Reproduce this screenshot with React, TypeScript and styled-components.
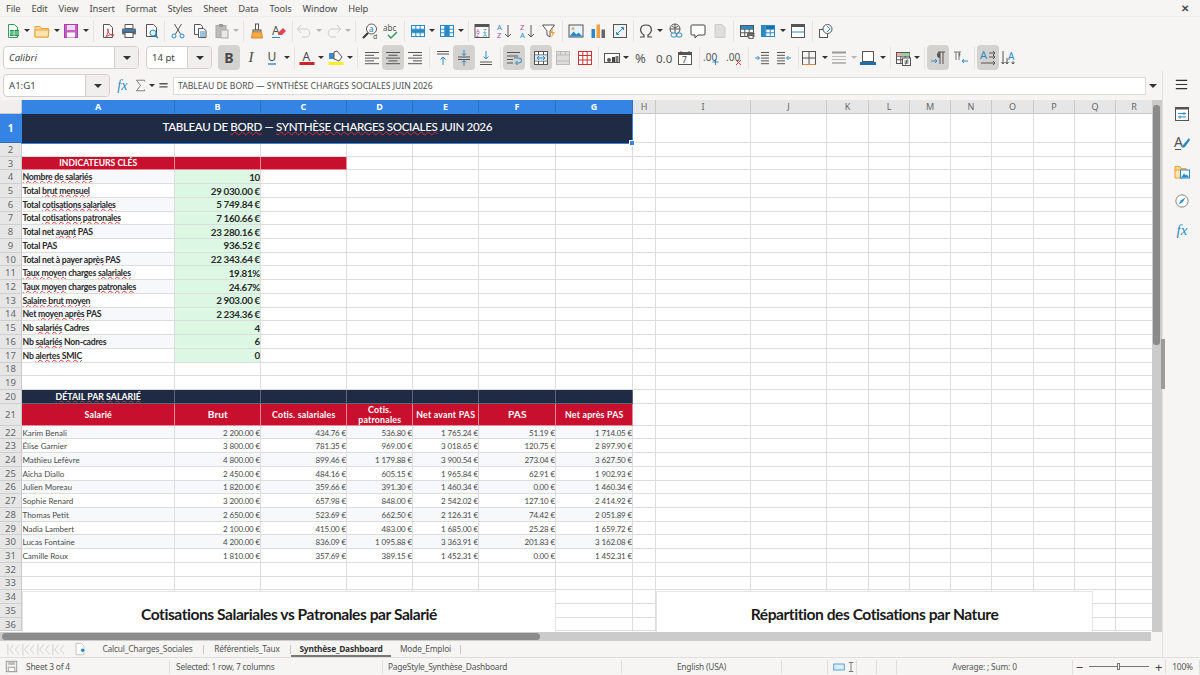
import React from "react";
import styled, { createGlobalStyle } from "styled-components";

const UI_FONT = '"Noto Sans", "Open Sans", sans-serif';
const CELL_FONT = 'Lato, "Noto Sans", sans-serif';
const BLUE = "#2a8ac8";
const NAVY = "#1f2a44";
const RED = "#c8102e";
const GRID = "#dddddd";

const GlobalStyle = createGlobalStyle`
  html, body { margin: 0; padding: 0; height: 100%; background: #f6f5f4; overflow: hidden; }
  #root { width: 1200px; height: 675px; }
`;

const Page = styled.div`
  width: 1200px;
  height: 675px;
  display: flex;
  flex-direction: column;
  font-family: ${UI_FONT};
  color: #3d3d3d;
  background: #f6f5f4;
  overflow: hidden;
`;

/* ---------- menu ---------- */

const MenuBar = styled.div`
  height: 17px;
  box-sizing: border-box;
  display: flex;
  align-items: center;
  padding: 0 6px;
  gap: 11px;
  font-size: 9.4px;
  letter-spacing: -0.15px;
  flex: none;
  color: #4a4a4a;
  border-bottom: 1px solid #efeeec;
`;

const CloseMark = styled.span`
  margin-left: auto;
  margin-right: 5px;
  font-size: 10px;
  font-weight: 700;
`;

/* ---------- toolbars ---------- */

const ToolRow = styled.div<{ $h: number }>`
  height: ${(p) => p.$h}px;
  display: flex;
  align-items: center;
  flex: none;
`;

const Slot = styled.div<{ $w: number }>`
  width: ${(p) => p.$w}px;
  height: 100%;
  flex: none;
  display: flex;
  align-items: center;
  justify-content: center;
`;

const ToolButton = styled.div<{ $active?: boolean; $dim?: boolean }>`
  width: 22px;
  height: 25px;
  flex: none;
  display: flex;
  align-items: center;
  justify-content: center;
  border-radius: 4px;
  background: ${(p) => (p.$active ? "#d4d2cf" : "transparent")};
  opacity: ${(p) => (p.$dim ? 0.45 : 1)};
`;

const Caret = styled.span<{ $dim?: boolean }>`
  width: 0;
  height: 0;
  border-left: 3px solid transparent;
  border-right: 3px solid transparent;
  border-top: 3px solid ${(p) => (p.$dim ? "#b5b5b5" : "#333")};
`;

const SepLine = styled.span`
  width: 1px;
  height: 22px;
  background: #e6e4e1;
`;

const GlyphB = styled.span`
  font: 700 14px ${UI_FONT};
  color: #4a4a4a;
`;

const GlyphI = styled.span`
  font: italic 400 15px "Liberation Serif", serif;
  color: #4a4a4a;
`;

const GlyphU = styled.span`
  font: 400 12px ${UI_FONT};
  color: #4a4a4a;
  border-bottom: 2px solid #6fa8d6;
  line-height: 13px;
`;

const Combo = styled.div<{ $w: number; $left: number }>`
  width: ${(p) => p.$w}px;
  height: 23px;
  margin-left: ${(p) => p.$left}px;
  flex: none;
  display: flex;
  border: 1px solid #d3d0cc;
  border-radius: 4px;
  background: #fff;
  overflow: hidden;
  box-sizing: border-box;
`;

const ComboText = styled.div<{ $italic?: boolean }>`
  flex: 1;
  display: flex;
  align-items: center;
  padding-left: 5px;
  font-size: 9.6px;
  font-style: ${(p) => (p.$italic ? "italic" : "normal")};
  color: #444;
`;

const ComboArrow = styled.div<{ $w: number }>`
  width: ${(p) => p.$w}px;
  flex: none;
  display: flex;
  align-items: center;
  justify-content: center;
  background: #f1efed;
  border-left: 1px solid #d3d0cc;
`;

const BigCaret = styled(Caret)`
  border-left-width: 4px;
  border-right-width: 4px;
  border-top-width: 4px;
`;

/* ---------- body ---------- */

const Body = styled.div`
  flex: 1;
  min-height: 0;
  display: flex;
`;

const MainColumn = styled.div`
  width: 1162px;
  flex: none;
  display: flex;
  flex-direction: column;
`;

const FormulaBar = styled.div`
  height: 29px;
  flex: none;
  display: flex;
  align-items: center;
  padding-left: 3px;
`;

const FormulaIcons = styled.div`
  width: 63px;
  flex: none;
  display: flex;
  align-items: center;
  height: 100%;
`;

const FormulaInput = styled.div`
  width: 973px;
  height: 18px;
  flex: none;
  box-sizing: border-box;
  background: #fff;
  border: 1px solid #dddbd8;
  display: flex;
  align-items: center;
  padding-left: 4px;
  font-size: 8.6px;
  color: #4d4d4d;
  white-space: nowrap;
`;

const SheetRow = styled.div`
  height: 532px;
  flex: none;
  display: flex;
  position: relative;
`;

const SheetViewport = styled.div`
  width: 1152px;
  flex: none;
  height: 100%;
  overflow: hidden;
  position: relative;
  background: #fff;
`;

const SheetGrid = styled.div`
  display: grid;
  grid-template-columns: 22px 153px 86px 86px 66px 66px 77px 77px 23px 95px 76px 42px 41px 41px 41px 42px 41px 41px 37px;
  grid-template-rows: 14px 29px repeat(19, 13.72px) 22px repeat(15, 13.72px);
  font-family: ${CELL_FONT};
`;

const ColHead = styled.div<{ $on?: boolean }>`
  box-sizing: border-box;
  display: flex;
  align-items: center;
  justify-content: center;
  font: ${(p) => (p.$on ? 700 : 400)} 9px ${UI_FONT};
  color: ${(p) => (p.$on ? "#fff" : "#666")};
  background: ${(p) => (p.$on ? "#3584e4" : "#e6e6e6")};
  border-right: 1px solid ${(p) => (p.$on ? "#2a6fc2" : "#c9c9c9")};
  border-bottom: 1px solid ${(p) => (p.$on ? "#9fc4f0" : "#c9c9c9")};
`;

const RowHead = styled(ColHead)`
  font-size: ${(p) => (p.$on ? 10 : 9.5)}px;
  border-right: 1px solid #c9c9c9;
  border-bottom: 1px solid ${(p) => (p.$on ? "#2a6fc2" : "#cfcfcf")};
`;

const Corner = styled.div`
  background: #f0efed;
  border-right: 1px solid #c9c9c9;
  border-bottom: 1px solid #c9c9c9;
`;

const Cell = styled.div<{
  $bg?: string;
  $span?: number;
  $align?: string;
  $color?: string;
  $size?: number;
  $weight?: number;
  $line?: string;
  $spacing?: number;
  $drop?: number;
  $lift?: number;
}>`
  box-sizing: border-box;
  min-width: 0;
  grid-column: span ${(p) => p.$span ?? 1};
  display: flex;
  align-items: center;
  justify-content: ${(p) => p.$align ?? "flex-start"};
  white-space: nowrap;
  overflow: hidden;
  padding: ${(p) => p.$drop ?? 0}px 0 ${(p) => p.$lift ?? 0}px 0.5px;
  background: ${(p) => p.$bg ?? "#fff"};
  color: ${(p) => p.$color ?? "#222"};
  font-size: ${(p) => p.$size ?? 9}px;
  font-weight: ${(p) => p.$weight ?? 400};
  letter-spacing: ${(p) => p.$spacing ?? 0}px;
  border-right: 1px solid ${(p) => p.$line ?? GRID};
  border-bottom: 1px solid ${(p) => p.$line ?? GRID};
`;

const WrapHead = styled.span`
  white-space: normal;
  text-align: center;
  line-height: 10px;
  width: 52px;
`;

const Squiggle = styled.span`
  text-decoration: underline wavy #d9303c 1px;
  text-underline-offset: 0;
`;

const Selection = styled.div`
  position: absolute;
  left: 21px;
  top: 13px;
  width: 610px;
  height: 29px;
  border: 1px solid #3584e4;
  pointer-events: none;
`;

const FillHandle = styled.div`
  position: absolute;
  right: -3px;
  bottom: -3px;
  width: 4px;
  height: 4px;
  background: #3584e4;
  border: 1px solid #fff;
`;

const ChartFrame = styled.div<{ $left: number; $width: number }>`
  position: absolute;
  left: ${(p) => p.$left}px;
  top: 491px;
  width: ${(p) => p.$width}px;
  height: 60px;
  box-sizing: border-box;
  background: #fff;
  border: 1px solid #e4e4e4;
  display: flex;
  justify-content: center;
  padding-top: 12.5px;
  font: 700 15.6px ${CELL_FONT};
  letter-spacing: -0.46px;
  color: #1a1a1a;
`;

const VScroll = styled.div`
  width: 10px;
  flex: none;
  background: #cbcbcb;
  padding: 5px 2px 0 1px;
  box-sizing: border-box;
`;

const VThumb = styled.div`
  height: 240px;
  border-radius: 3px;
  background: #8b8b8b;
`;

const SplitHandle = styled.div`
  position: absolute;
  left: 1161px;
  top: 239px;
  width: 4px;
  height: 50px;
  background: #9b9b9b;
`;

const HScroll = styled.div`
  height: 9px;
  width: 1151px;
  flex: none;
  background: #cbcbcb;
  padding: 1px 0 1px 2px;
  box-sizing: border-box;
`;

const HThumb = styled.div`
  width: 538px;
  height: 100%;
  border-radius: 4px;
  background: #8b8b8b;
`;

const TabStrip = styled.div`
  height: 16px;
  flex: none;
  display: flex;
  align-items: center;
  font-size: 8.4px;
  letter-spacing: -0.2px;
  color: #555;
`;

const TabNav = styled.div`
  width: 61px;
  margin-left: 6px;
  flex: none;
  display: flex;
  align-items: center;
  opacity: 0.4;
`;

const NewSheet = styled.div`
  width: 25px;
  flex: none;
  display: flex;
  justify-content: center;
`;

const Tab = styled.div<{ $active?: boolean; $w: number }>`
  width: ${(p) => p.$w}px;
  height: 16px;
  flex: none;
  box-sizing: border-box;
  display: flex;
  align-items: center;
  justify-content: center;
  font-weight: ${(p) => (p.$active ? 700 : 400)};
  color: ${(p) => (p.$active ? "#333" : "#555")};
  border-bottom: 2px solid ${(p) => (p.$active ? "#777" : "transparent")};
`;

const TabSep = styled.span`
  width: 1px;
  height: 9px;
  flex: none;
  background: #c9c7c4;
`;

const SideBar = styled.div`
  width: 38px;
  flex: none;
  display: flex;
  flex-direction: column;
  align-items: center;
  gap: 5px;
  padding-top: 1px;
  border-left: 1px solid #e2e0dd;
  box-sizing: border-box;
`;

const SideIcon = styled.div<{ $gap?: number }>`
  width: 24px;
  height: 24px;
  display: flex;
  align-items: center;
  justify-content: center;
  margin-bottom: ${(p) => p.$gap ?? 0}px;
`;

const StatusBar = styled.div`
  height: 18px;
  flex: none;
  display: flex;
  align-items: center;
  border-top: 1px solid #e0dedb;
  font-size: 8.4px;
  letter-spacing: -0.2px;
  color: #555;
  box-sizing: border-box;
`;

const StatusCell = styled.div<{ $w: number; $center?: boolean; $pad?: number; $gap?: number }>`
  width: ${(p) => p.$w}px;
  height: 14px;
  flex: none;
  box-sizing: border-box;
  display: flex;
  align-items: center;
  gap: ${(p) => p.$gap ?? 8}px;
  padding-left: ${(p) => p.$pad ?? 0}px;
  justify-content: ${(p) => (p.$center ? "center" : "flex-start")};
  border-right: 1px solid #e0dedb;
  white-space: nowrap;
`;

const ZoomTrack = styled.div`
  width: 60px;
  height: 1px;
  background: #777;
  position: relative;
`;

const ZoomKnob = styled.div`
  position: absolute;
  left: 28px;
  top: -3px;
  width: 3px;
  height: 7px;
  border: 1px solid #777;
  background: #f6f5f4;
  box-sizing: border-box;
`;

const ZoomSign = styled.span`
  font-size: 13px;
  line-height: 12px;
  color: #444;
`;

const IconSvg = styled.svg`
  overflow: visible;
  flex: none;
`;

/* ---------- icons ---------- */

const Svg: React.FC<{ size?: number; children: React.ReactNode }> = ({ size = 16, children }) => (
  <IconSvg width={size} height={size} viewBox="0 0 16 16" fill="none">
    {children}
  </IconSvg>
);

const L = ({ d, c = "#555", w = 1 }: { d: string; c?: string; w?: number }) => (
  <path d={d} stroke={c} strokeWidth={w} fill="none" />
);

const Letter = ({ x, y, t, c = "#555", s = 9, it }: { x: number; y: number; t: string; c?: string; s?: number; it?: boolean }) => (
  <text x={x} y={y} fill={c} fontSize={s} fontFamily={it ? "Liberation Serif" : "Noto Sans"} fontStyle={it ? "italic" : "normal"}>
    {t}
  </text>
);

const Table = ({ c = "#555" }: { c?: string }) => (
  <g>
    <rect x="1.5" y="2.5" width="13" height="11" fill="#fff" stroke={c} />
    <L d="M1.5 6.2h13M1.5 9.8h13M5.8 2.5v11M10.2 2.5v11" c={c} />
  </g>
);

const aligned = (lines: [number, number][]) => lines.map(([x, w], i) => <L key={i} d={`M${x} ${2.5 + i * 2.8}h${w}`} />);

const ICONS: Record<string, React.ReactNode> = {
  newDoc: <><path d="M3.5 1.5h6l3 3v10h-9z" fill="#fff" stroke="#2f9e57" /><rect x="5" y="7" width="9" height="6" fill="#1f8f4b" /><L d="M5 9h9M5 11h9M9 7v6" c="#bfe5cc" /></>,
  open: <><path d="M1 3.5h5l1.5 2h7v8.5H1z" fill="#fcd690" stroke="#e6a23c" /><path d="M1 7h14l-1 7H1z" fill="#fde3ae" stroke="#e6a23c" /></>,
  save: <><rect x="1.5" y="1.5" width="13" height="13" fill="#c561c7" stroke="#a83ea9" /><rect x="4" y="2" width="8" height="5" fill="#f4dbf5" /><rect x="4" y="9.5" width="8" height="5" fill="#fff" /></>,
  pdf: <><path d="M3.5 1.5h6l3 3v10h-9z" fill="#fff" stroke="#555" /><L d="M6 14c2-4 3-7 2-8s-1 3 3 6c1 1 3 1 3 0s-4-1-8 2" c="#d9434e" /></>,
  print: <><path d="M4 1.5h8v4H4z" fill="#fff" stroke="#555" /><rect x="1" y="5.5" width="14" height="6" rx="1" fill="#5b6c7a" /><rect x="4" y="9.5" width="8" height="5" fill="#fff" stroke="#555" /><L d="M2 7.5h12" c="#2a8ac8" /></>,
  preview: <><path d="M2.5 1.5h7l3 3v9h-10z" fill="#fff" stroke="#555" /><circle cx="9" cy="10" r="3" fill="#e5f2fb" stroke={BLUE} /><L d="M11 12l3 3" c={BLUE} w={1.5} /></>,
  cut: <><L d="M4.5 1l6 10M11.5 1l-6 10" c="#555" /><circle cx="4" cy="13" r="2" stroke={BLUE} /><circle cx="12" cy="13" r="2" stroke={BLUE} /></>,
  copy: <><path d="M2.5 1.5h6l2 2v8h-8z" fill="#fff" stroke="#555" /><path d="M6.5 5.5h5l2.5 2v7h-7.500z" fill="#fff" stroke="#555" /><L d="M8 9h5M8 11h5M8 13h5" c={BLUE} /></>,
  paste: <><rect x="2" y="2.5" width="10" height="12" fill="#bbb" stroke="#aaa" /><rect x="5" y="1" width="4" height="3" fill="#999" /><rect x="7" y="7" width="7" height="8" fill="#e8e8e8" stroke="#aaa" /></>,
  clone: <><rect x="6.500" y="1" width="3" height="6" fill="#fff" stroke="#555" /><rect x="4" y="7" width="8" height="2" fill="#ddd" stroke="#555" /><path d="M3.5 9h9l1 6H2.500z" fill="#f5a94a" stroke="#d98a2b" /></>,
  clear: <><Letter x={1} y={12} t="A" s={12} /><L d="M1 14.500h8" c={BLUE} /><path d="M8 9l4-4 3 3-4 4H8z" fill="#e2434f" /></>,
  undo: <><L d="M2 6h8c5 0 5 8 0 8H6" c="#999" /><L d="M5 2L1.500 6l3.500 4" c="#999" /></>,
  redo: <><L d="M14 6H6c-5 0-5 8 0 8h4" c="#999" /><L d="M11 2l3.500 4-3.500 4" c="#999" /></>,
  find: <><circle cx="9.500" cy="6" r="5" fill="#fff" stroke="#555" /><Letter x={7} y={8.500} t="a" s={8} c="#2a6fa8" /><L d="M6 10l-5 5" c="#333" w={2} /><Letter x={11} y={15.500} t="d" s={7} /></>,
  spell: <><Letter x={0} y={7.500} t="abc" s={8} /><L d="M5 12l3 3 6-6" c="#2f9e57" w={1.500} /></>,
  rows: <><Table c={BLUE} /><rect x="2" y="6.500" width="12" height="3" fill={BLUE} /></>,
  cols: <><Table c={BLUE} /><rect x="6" y="3" width="4" height="10" fill={BLUE} /></>,
  sort: <><rect x="1" y="1.500" width="14" height="13" fill="#fff" stroke="#555" /><rect x="1" y="1.500" width="14" height="2.500" fill="#555" /><Letter x={2} y={9.500} t="A" s={6} c="#b34bb5" /><Letter x={2} y={14.300} t="Z" s={6} c="#b34bb5" /><Letter x={9} y={9.500} t="Z" s={6} c={BLUE} /><Letter x={9} y={14.300} t="A" s={6} c={BLUE} /></>,
  asc: <><Letter x={0} y={7} t="A" s={7.500} c={BLUE} /><Letter x={0} y={15} t="Z" s={7.500} c="#b34bb5" /><L d="M11 2v12M8 11l3 3 3-3" /></>,
  desc: <><Letter x={0} y={7} t="Z" s={7.500} c="#b34bb5" /><Letter x={0} y={15} t="A" s={7.500} c={BLUE} /><L d="M11 2v12M8 11l3 3 3-3" /></>,
  filter: <><path d="M1.500 2h12l-4.500 6v6l-3-2V8z" fill="#fff" stroke="#555" /><path d="M12 5l-3 5h2.500l-1.500 5 4-6h-2.500z" fill="#f0a030" /></>,
  image: <><rect x="1" y="2" width="14" height="12" fill="#eaf4fb" stroke="#555" /><circle cx="5" cy="5.500" r="1.500" fill="#f2b04a" /><path d="M1.500 13.500l4-5 3 3 2-2 4 4z" fill={BLUE} /></>,
  chart: <><rect x="1.500" y="6" width="3.500" height="9" fill={BLUE} /><rect x="6.500" y="1.500" width="3.500" height="13.500" fill="#f0a040" /><rect x="11.500" y="6.500" width="3.500" height="8.500" fill="#666" /></>,
  pivot: <><rect x="1.500" y="1.500" width="13" height="13" fill="#f1f1f1" stroke="#555" /><L d="M5 11l6-6M9 4.500h2.500V7M4.500 9v2.500H7" c={BLUE} /></>,
  omega: <L d="M2 14h4v-2C1 9 1.500 2 8 2s7 7 2 10v2h4" c="#444" w={1.200} />,
  link: <><circle cx="7" cy="6" r="5" stroke="#555" /><L d="M2 6h10M7 1v10M4 3c2 2 4 2 6 0" /><rect x="3" y="10" width="6" height="4" rx="2" fill="#fff" stroke={BLUE} /><rect x="8" y="10" width="6" height="4" rx="2" stroke={BLUE} /></>,
  comment: <path d="M2 2h12a1 1 0 0 1 1 1v8a1 1 0 0 1-1 1H8l-3 3v-3H2a1 1 0 0 1-1-1V3a1 1 0 0 1 1-1z" fill="#fff" stroke="#444" />,
  header: <path d="M3 1.500h7l3 3v10H3z" fill="#ddd" stroke="#ccc" />,
  tprint: <><Table /><rect x="2" y="3" width="12" height="3" fill={BLUE} /><rect x="8" y="9.500" width="7.500" height="5" rx="1" fill="#666" /><rect x="10" y="12.500" width="4" height="3" fill="#fff" stroke="#666" /></>,
  tcol: <><Table c={BLUE} /><rect x="2" y="3" width="3.500" height="10" fill={BLUE} /><rect x="6" y="3" width="8" height="3" fill="#1c6fa6" /></>,
  win: <><rect x="1.500" y="1.500" width="13" height="13" fill="#fff" stroke="#555" /><rect x="1.500" y="1.500" width="13" height="2.500" fill="#555" /><L d="M2 9h12" c={BLUE} /></>,
  shape: <><rect x="1.500" y="6.500" width="8" height="8" fill="#fff" stroke="#555" /><circle cx="9.500" cy="6" r="4.500" fill="#fff" stroke="#555" /><path d="M9 3l3 3-3 3" stroke={BLUE} /></>,
  color: <><Letter x={3.500} y={11} t="A" s={12} c="#444" /><rect x="0.500" y="12" width="15" height="3" fill="#c9262c" /></>,
  high: <><rect x="0.500" y="12" width="15" height="3" fill="#f6ee27" /><rect x="1" y="3" width="6" height="6" fill="#3d8ac4" /><path d="M6 2l3-1 5 6-3 4-5-2z" fill="#fff" stroke="#555" /></>,
  left: <>{aligned([[1, 14], [1, 9], [1, 14], [1, 9], [1, 14]])}</>,
  center: <>{aligned([[1, 14], [3.500, 9], [1, 14], [3.500, 9], [1, 14]])}</>,
  right: <>{aligned([[1, 14], [6, 9], [1, 14], [6, 9], [1, 14]])}</>,
  top: <><L d="M2 1.500h12M2 4h12" /><L d="M8 7v8M5.500 9.500L8 7l2.500 2.500" c={BLUE} /></>,
  mid: <><L d="M2 7h12M2 9.500h12" /><L d="M8 0v5.500M6 3.500l2 2 2-2M8 16v-5.500M6 12.500l2-2 2 2" c={BLUE} /></>,
  bottom: <><L d="M2 12h12M2 14.500h12" /><L d="M8 1v8M5.500 6.500L8 9l2.500-2.500" c={BLUE} /></>,
  wrap: <><L d="M1 2.500h13M1 6h11M1 9.500h6M1 13h6" /><L d="M8 8h5a2 2 0 0 1 0 5h-3M11.500 11l-2 2 2 2" c={BLUE} /></>,
  merge: <><rect x="1.500" y="1.500" width="13" height="13" fill="#fff" stroke="#555" /><L d="M1.500 5h13M1.500 11h13M5.500 1.500V5M10.500 1.500V5M5.500 11v3.500M10.500 11v3.500" /><rect x="2" y="5.500" width="12" height="5" fill="#d8ebf8" /><L d="M4 8h8M6 6l-2 2 2 2M10 6l2 2-2 2" c={BLUE} /></>,
  merged: <><rect x="1.500" y="1.500" width="13" height="13" fill="#ddd" stroke="#bbb" /><L d="M1.500 5h13M1.500 11h13M5.500 1.500V5M10.500 1.500V5" c="#bbb" /></>,
  unmerge: <><rect x="1.500" y="1.500" width="13" height="13" fill="#fff" stroke="#c33" /><L d="M1.500 5.500h13M1.500 10h13M5.800 1.500v13M10.200 1.500v13" c="#c33" /></>,
  currency: <><rect x="0.500" y="3.500" width="15" height="9" fill="#fff" stroke="#555" /><circle cx="5" cy="10" r="2" fill="#555" /><rect x="8" y="7" width="3" height="5" fill="#444" /><rect x="11.500" y="6" width="3" height="6" fill="#777" /></>,
  percent: <Letter x={1} y={13} t="%" s={13} c="#555" />,
  number: <Letter x={0} y={12.500} t="0.0" s={11.500} c="#555" />,
  date: <><rect x="1.500" y="2.500" width="13" height="12" fill="#fff" stroke="#555" /><rect x="1.500" y="2.500" width="13" height="2.500" fill="#555" /><L d="M4 1v3M12 1v3" /><Letter x={5} y={13} t="7" s={8.500} c="#444" /></>,
  addDec: <><Letter x={0} y={11} t=".00" s={10} c="#555" /><L d="M12.500 9v6M9.500 12h6" c={BLUE} /></>,
  delDec: <><Letter x={0} y={11} t=".00" s={10} c="#555" /><L d="M10 10l5 5M15 10l-5 5" c="#d33" /></>,
  indent: <><L d="M7 2.500h8M7 5.300h8M7 8.100h8M7 10.900h8M7 13.700h8" /><L d="M1 8h4M3.500 6L5.500 8l-2 2" c={BLUE} /></>,
  outdent: <><L d="M1 2.500h8M1 5.300h8M1 8.100h8M1 10.900h8M1 13.700h8" /><L d="M15 8h-4M12.500 6L10.500 8l2 2" c={BLUE} /></>,
  borders: <><rect x="1.500" y="1.500" width="13" height="13" stroke="#555" /><L d="M8 1.500v13M1.500 8h13" c="#555" /><L d="M1.500 14.500h13" c="#d78b3d" /></>,
  bstyle: <><L d="M1 2.500h14" c="#999" w={2} /><L d="M1 6.500h14M1 9.500h14" c="#bbb" /><L d="M1 13h14" c="#bbb" w={2} /></>,
  bcolor: <><rect x="2.500" y="1.500" width="11" height="10" fill="#fff" stroke="#555" /><rect x="0" y="12" width="16" height="3" fill="#1f6fb0" /></>,
  cond: <><Table /><rect x="2" y="3" width="5" height="3" fill="#f5a9a9" /><rect x="6.500" y="3" width="8" height="3" fill="#9ad29a" /><rect x="7.500" y="8" width="8" height="7.500" fill="#fff" stroke="#555" /><L d="M9.500 11h4M9.500 13h4M12.500 9.500l-2 5" /></>,
  ltr: <><L d="M8 2h7M10 2v12M13 2v12" c="#555" /><path d="M10 2a3 3 0 0 0 0 6z" fill="#555" /><L d="M1 11h6M5 9l2 2-2 2" c={BLUE} /></>,
  rtl: <><L d="M1 2h7M3 2v8M6 2v8" c="#777" /><path d="M6 2a3 3 0 0 1 0 5z" fill="#777" /><L d="M15 11H9M11 9l-2 2 2 2" c={BLUE} /></>,
  horiz: <><Letter x={0} y={9} t="A" s={11} c={BLUE} /><L d="M9 3h6M13 1l2 2-2 2M9 7h6M13 5l2 2-2 2M1 13h14M13 11l2 2-2 2" /></>,
  vert: <><Letter x={7} y={10} t="A" s={10} c={BLUE} /><L d="M2 1v13M0.500 12L2 14l1.500-2M6 8v6M4.500 12L6 14l1.500-2M12 11v3M10.500 12.500L12 14l1.500-1.500" /></>,
  fx: <Letter x={2.500} y={13} t="fx" s={15} c="#2a8ac8" it />,
  sigma: <L d="M13 3V1.500H3L8 8l-5 6.500h10V13" c="#666" />,
  equal: <L d="M2 5.500h12M2 10h12" c="#555" w={2} />,
  menu: <L d="M1 3h14M1 8h14M1 13h14" c="#333" w={1.500} />,
  props: <><rect x="1.500" y="1.500" width="13" height="13" fill="#fff" stroke="#555" /><rect x="1.500" y="1.500" width="13" height="2" fill="#555" /><L d="M4 7.500h8M4 11h8" c={BLUE} /><L d="M10 6v3M6 9.500v3" c={BLUE} /></>,
  styles: <><Letter x={0} y={12} t="A" s={14} c="#555" /><L d="M1 14.500h6" c="#555" /><path d="M15 3l-6 7-1 3 3-1 5-7z" fill={BLUE} /></>,
  gallery: <><path d="M1 2.500h5l1 2h5v3H1z" fill="#fcd690" stroke="#e6a23c" /><path d="M1 6h8v8H1z" fill="#fde3ae" stroke="#e6a23c" /><rect x="6.500" y="6" width="9" height="8" fill="#fff" stroke={BLUE} /><path d="M7 13.500l3-4 2 2 1-1 2 3z" fill={BLUE} /></>,
  nav: <><circle cx="8" cy="8" r="7" fill="#fff" stroke="#777" /><path d="M12 4L9 9 4 12l3-5z" fill={BLUE} /></>,
  status: <><rect x="1.500" y="1.500" width="13" height="13" fill="#eee" stroke="#888" /><rect x="4" y="2" width="8" height="4" fill="#bbb" /><rect x="4" y="9" width="8" height="5" fill="#fff" stroke="#999" /></>,
  sheetAdd: <><path d="M3.500 1.500h6l3 3v10h-9z" fill="#fff" stroke="#bbb" /><circle cx="11" cy="9.500" r="2" fill={BLUE} /></>,
  navArrows: <L d="M2 2v12M8 3L4 8l4 5M14 3l-4 5 4 5" c="#999" />,
  selMode: <rect x="1" y="4" width="14" height="8" fill="#d9edf8" stroke={BLUE} />,
  beam: <L d="M5 2h6M8 2v12M5 14h6" c="#555" />,
};

/* ---------- toolbar data ---------- */

type Item = { c: number; kind?: "dd" | "sep"; icon?: React.ReactNode; on?: boolean; dim?: boolean };

const ic = (c: number, name: string, on?: boolean, dim?: boolean): Item => ({ c, icon: ICONS[name], on, dim });
const dd = (c: number, dim?: boolean): Item => ({ c, kind: "dd", dim });
const sep = (c: number): Item => ({ c, kind: "sep" });

const STANDARD: Item[] = [
  ic(13, "newDoc"), dd(27), ic(42, "open"), dd(57), ic(71, "save"), dd(86), sep(93),
  ic(108, "pdf"), ic(129, "print"), ic(152, "preview"), sep(164),
  ic(178, "cut"), ic(200, "copy"), ic(222, "paste"), dd(236, true), sep(243),
  ic(257, "clone"), ic(279, "clear"), sep(292),
  ic(304, "undo", false, true), dd(319, true), ic(334, "redo", false, true), dd(348, true), sep(355),
  ic(370, "find"), ic(391, "spell"), sep(404),
  ic(418, "rows"), dd(432), ic(447, "cols"), dd(461), sep(468),
  ic(482, "sort"), ic(505, "asc"), ic(528, "desc"), ic(549, "filter"), sep(562),
  ic(576, "image"), ic(598, "chart"), ic(620, "pivot"), sep(633),
  ic(646, "omega"), dd(660), ic(676, "link"), ic(698, "comment"), ic(720, "header"), sep(733),
  ic(747, "tprint"), ic(768, "tcol"), dd(783), ic(798, "win"), sep(812), ic(826, "shape"),
];

const FORMATTING: Item[] = [
  { c: 229, icon: <GlyphB>B</GlyphB>, on: true },
  { c: 251, icon: <GlyphI>I</GlyphI> },
  { c: 272, icon: <GlyphU>U</GlyphU> },
  dd(287), sep(294),
  ic(307, "color"), dd(321), ic(336, "high"), dd(350), sep(357),
  ic(372, "left"), ic(393, "center", true), ic(415, "right"), sep(429),
  ic(443, "top"), ic(464, "mid", true), ic(486, "bottom"), sep(500),
  ic(514, "wrap", true), ic(541, "merge", true), ic(563, "merged"), ic(585, "unmerge"), sep(598),
  ic(612, "currency"), dd(626), ic(642, "percent"), ic(664, "number"), ic(685, "date"), sep(699),
  ic(711, "addDec"), ic(734, "delDec"), sep(748),
  ic(762, "indent"), ic(784, "outdent"), sep(798),
  ic(809, "borders"), dd(825), ic(839, "bstyle"), dd(854, true), ic(868, "bcolor"), dd(883), sep(890),
  ic(903, "cond"), dd(917), sep(924),
  ic(938, "ltr", true), ic(961, "rtl"), sep(974),
  ic(988, "horiz", true), ic(1009, "vert"),
];

// a slot's half width: half the step to the nearest neighbour on the side that keeps slots touching.
// Slots run midpoint to midpoint, so an item only stays centred when both neighbours are equally far;
// the content is therefore nudged with a margin computed from the difference.
const Centered = styled.div<{ $shift: number }>`
  display: flex;
  align-items: center;
  justify-content: center;
  margin-left: ${(p) => p.$shift}px;
  flex: none;
`;

// text glyphs (B, I, U) stay html, every other icon is svg content
const wrapIcon = (icon: React.ReactNode) => {
  if (React.isValidElement(icon) && (icon.type === GlyphB || icon.type === GlyphI || icon.type === GlyphU)) return icon;
  return <Svg>{icon}</Svg>;
};

const Tools: React.FC<{ items: Item[]; start: number }> = ({ items, start }) => {
  const edge = (i: number) => (i === 0 ? start : i === items.length ? items[i - 1].c + 12 : (items[i - 1].c + items[i].c) / 2);
  return (
    <>
      {items.map((item, i) => {
        const left = edge(i);
        const right = edge(i + 1);
        return (
          <Slot key={i} $w={right - left}>
            <Centered $shift={2 * item.c - left - right}>
              {item.kind === "dd" && <Caret $dim={item.dim} />}
              {item.kind === "sep" && <SepLine />}
              {!item.kind && (
                <ToolButton $active={item.on} $dim={item.dim}>
                  {wrapIcon(item.icon)}
                </ToolButton>
              )}
            </Centered>
          </Slot>
        );
      })}
    </>
  );
};

const Icon: React.FC<{ name: string; size?: number }> = ({ name, size }) => <Svg size={size}>{ICONS[name]}</Svg>;

/* ---------- sheet data ---------- */

const COLS = ["A", "B", "C", "D", "E", "F", "G", "H", "I", "J", "K", "L", "M", "N", "O", "P", "Q", "R"];

const KPIS: [string, string][] = [
  ["~Nombre de salariés~", "10"],
  ["Total ~brut mensuel~", "29 030.00 €"],
  ["Total ~cotisations salariales~", "5 749.84 €"],
  ["Total ~cotisations patronales~", "7 160.66 €"],
  ["Total net ~avant~ PAS", "23 280.16 €"],
  ["Total PAS", "936.52 €"],
  ["Total net à payer ~après~ PAS", "22 343.64 €"],
  ["~Taux moyen~ charges ~salariales~", "19.81%"],
  ["~Taux moyen~ charges ~patronales~", "24.67%"],
  ["~Salaire brut moyen~", "2 903.00 €"],
  ["Net ~moyen après~ PAS", "2 234.36 €"],
  ["Nb ~salariés~ Cadres", "4"],
  ["Nb ~salariés~ Non-cadres", "6"],
  ["Nb ~alertes SMIC~", "0"],
];

const STAFF: string[][] = [
  ["Karim Benali", "2 200.00", "434.76", "536.80", "1 765.24", "51.19", "1 714.05"],
  ["Élise Garnier", "3 800.00", "781.35", "969.00", "3 018.65", "120.75", "2 897.90"],
  ["Mathieu Lefèvre", "4 800.00", "899.46", "1 179.88", "3 900.54", "273.04", "3 627.50"],
  ["Aïcha Diallo", "2 450.00", "484.16", "605.15", "1 965.84", "62.91", "1 902.93"],
  ["Julien Moreau", "1 820.00", "359.66", "391.30", "1 460.34", "0.00", "1 460.34"],
  ["Sophie Renard", "3 200.00", "657.98", "848.00", "2 542.02", "127.10", "2 414.92"],
  ["Thomas Petit", "2 650.00", "523.69", "662.50", "2 126.31", "74.42", "2 051.89"],
  ["Nadia Lambert", "2 100.00", "415.00", "483.00", "1 685.00", "25.28", "1 659.72"],
  ["Lucas Fontaine", "4 200.00", "836.09", "1 095.88", "3 363.91", "201.83", "3 162.08"],
  ["Camille Roux", "1 810.00", "357.69", "389.15", "1 452.31", "0.00", "1 452.31"],
];

const HEADS = ["Salarié", "Brut", "Cotis. salariales", "Cotis. patronales", "Net avant PAS", "PAS", "Net après PAS"];

// ~word~ marks what the spell checker underlines; one span keeps the spaces inside the flex cell
const marked = (text: string) => (
  <span>
    {text.split("~").map((part, i) => (i % 2 ? <Squiggle key={i}>{part}</Squiggle> : <React.Fragment key={i}>{part}</React.Fragment>))}
  </span>
);

const blanks = (from: number, to: number, prefix: string) =>
  Array.from({ length: to - from }, (_, i) => <Cell key={`${prefix}-${i}`} />);

const zebra = (i: number) => (i % 2 ? "#fff" : "#f6f8fc");

const Sheet: React.FC = () => {
  const rows: React.ReactNode[] = [];

  const header = (n: number, on = false) => (
    <RowHead key={`h${n}`} $on={on}>
      {n}
    </RowHead>
  );

  // row 1: merged title
  rows.push(header(1, true));
  rows.push(
    <Cell key="title" $span={7} $bg={NAVY} $color="#fff" $align="center" $size={11.6} $weight={500} $line={NAVY} $spacing={-0.35} $lift={3}>
      {marked("TABLEAU DE ~BORD~ — ~SYNTHÈSE CHARGES SOCIALES~ JUIN 2026")}
    </Cell>,
  );
  rows.push(...blanks(7, 18, "r1"));

  rows.push(header(2), ...blanks(0, 18, "r2"));

  // row 3: section band
  rows.push(header(3));
  rows.push(
    <Cell key="kpi-title" $bg={RED} $color="#fff" $align="center" $size={8.6} $weight={700} $line="#e98a99">
      INDICATEURS CLÉS
    </Cell>,
    <Cell key="kpi-b" $bg={RED} $line="#e98a99" />,
    <Cell key="kpi-c" $bg={RED} $line="#e98a99" />,
    ...blanks(3, 18, "r3"),
  );

  KPIS.forEach(([label, value], i) => {
    const n = i + 4;
    rows.push(header(n));
    rows.push(
      <Cell key={`a${n}`} $bg={zebra(i)} $size={8.7} $weight={700} $color="#2a2a2a" $spacing={-0.25}>
        {marked(label)}
      </Cell>,
      <Cell key={`b${n}`} $bg="#dcf7e3" $align="flex-end" $size={9.8} $weight={700} $color="#2a2a2a" $spacing={-0.3}>
        {value}
      </Cell>,
      ...blanks(2, 18, `r${n}`),
    );
  });

  rows.push(header(18), ...blanks(0, 18, "r18"));
  rows.push(header(19), ...blanks(0, 18, "r19"));

  // row 20: navy band
  rows.push(header(20));
  rows.push(
    <Cell key="d20" $bg={NAVY} $color="#fff" $align="center" $size={8.8} $weight={700} $line="#5d6579">
      <Squiggle>DÉTAIL PAR SALARIÉ</Squiggle>
    </Cell>,
    ...COLS.slice(1, 7).map((c) => <Cell key={`n${c}`} $bg={NAVY} $line="#5d6579" />),
    ...blanks(7, 18, "r20"),
  );

  // row 21: red column heads
  rows.push(header(21));
  HEADS.forEach((text, i) => {
    const big = text === "Brut" || text === "PAS";
    rows.push(
      <Cell key={`t${i}`} $bg={RED} $color="#fff" $align="center" $size={big ? 10.2 : 8.8} $weight={700} $line="#e98a99" $spacing={big ? 0 : 0.2} $drop={big ? 0 : 1}>
        {text === "Cotis. patronales" ? <WrapHead>{text}</WrapHead> : text}
      </Cell>,
    );
  });
  rows.push(...blanks(7, 18, "r21"));

  STAFF.forEach((row, i) => {
    const n = i + 22;
    rows.push(header(n));
    row.forEach((value, j) => {
      rows.push(
        <Cell key={`s${n}-${j}`} $bg={zebra(i)} $align={j ? "flex-end" : "flex-start"} $size={8} $spacing={j ? -0.15 : 0} $color="#4a4a4a" $drop={1}>
          {j ? `${value} €` : value}
        </Cell>,
      );
    });
    rows.push(...blanks(7, 18, `r${n}`));
  });

  for (let n = 32; n <= 36; n++) rows.push(header(n), ...blanks(0, 18, `r${n}`));

  return (
    <SheetViewport>
      <SheetGrid>
        <Corner />
        {COLS.map((c, i) => (
          <ColHead key={c} $on={i < 7}>
            {c}
          </ColHead>
        ))}
        {rows}
      </SheetGrid>
      <Selection>
        <FillHandle />
      </Selection>
      <ChartFrame $left={22} $width={534}>Cotisations Salariales vs Patronales par Salarié</ChartFrame>
      <ChartFrame $left={656} $width={437}>Répartition des Cotisations par Nature</ChartFrame>
    </SheetViewport>
  );
};

const TITLE = "TABLEAU DE BORD — SYNTHÈSE CHARGES SOCIALES JUIN 2026";

export default function App() {
  return (
    <Page>
      <GlobalStyle />
      <MenuBar>
        {["File", "Edit", "View", "Insert", "Format", "Styles", "Sheet", "Data", "Tools", "Window", "Help"].map((m) => (
          <span key={m}>{m}</span>
        ))}
        <CloseMark>✕</CloseMark>
      </MenuBar>

      <ToolRow $h={27}>
        <Tools items={STANDARD} start={0} />
      </ToolRow>

      <ToolRow $h={27}>
        <Combo $w={136} $left={3}>
          <ComboText $italic>Calibri</ComboText>
          <ComboArrow $w={23}>
            <BigCaret />
          </ComboArrow>
        </Combo>
        <Combo $w={66} $left={7}>
          <ComboText>14 pt</ComboText>
          <ComboArrow $w={23}>
            <BigCaret />
          </ComboArrow>
        </Combo>
        <Tools items={FORMATTING} start={212} />
      </ToolRow>

      <Body>
        <MainColumn>
          <FormulaBar>
            <Combo $w={107} $left={0}>
              <ComboText>A1:G1</ComboText>
              <ComboArrow $w={23}>
                <BigCaret />
              </ComboArrow>
            </Combo>
            <FormulaIcons>
              <Slot $w={24}><Icon name="fx" size={15} /></Slot>
              <Slot $w={12}><Icon name="sigma" size={13} /></Slot>
              <Slot $w={11}><Caret /></Slot>
              <Slot $w={12}><Icon name="equal" size={11} /></Slot>
            </FormulaIcons>
            <FormulaInput>{TITLE}</FormulaInput>
            <Slot $w={13}><BigCaret /></Slot>
          </FormulaBar>

          <SheetRow>
            <Sheet />
            <VScroll>
              <VThumb />
            </VScroll>
            <SplitHandle />
          </SheetRow>

          <HScroll>
            <HThumb />
          </HScroll>

          <TabStrip>
            <TabNav>
              <Icon name="navArrows" size={15} />
              <Icon name="navArrows" size={15} />
              <Icon name="navArrows" size={15} />
              <Icon name="navArrows" size={15} />
            </TabNav>
            <NewSheet>
              <Icon name="sheetAdd" size={14} />
            </NewSheet>
            <Tab $w={111}>Calcul_Charges_Sociales</Tab>
            <TabSep />
            <Tab $w={86}>Référentiels_Taux</Tab>
            <TabSep />
            <Tab $w={100} $active>Synthèse_Dashboard</Tab>
            <Tab $w={69}>Mode_Emploi</Tab>
            <TabSep />
          </TabStrip>
        </MainColumn>

        <SideBar>
          <SideIcon $gap={1}><Icon name="menu" size={13} /></SideIcon>
          <SideIcon><Icon name="props" /></SideIcon>
          <SideIcon><Icon name="styles" /></SideIcon>
          <SideIcon><Icon name="gallery" /></SideIcon>
          <SideIcon><Icon name="nav" size={14} /></SideIcon>
          <SideIcon><Icon name="fx" /></SideIcon>
        </SideBar>
      </Body>

      <StatusBar>
        <StatusCell $w={170} $pad={5}>
          <Icon name="status" size={13} />
          Sheet 3 of 4
        </StatusCell>
        <StatusCell $w={213} $pad={6}>Selected: 1 row, 7 columns</StatusCell>
        <StatusCell $w={239} $pad={5}>PageStyle_Synthèse_Dashboard</StatusCell>
        <StatusCell $w={160} $center>English (USA)</StatusCell>
        <StatusCell $w={46} />
        <StatusCell $w={29} $pad={5} $gap={0}>
          <Icon name="selMode" size={12} />
          <Icon name="beam" size={12} />
        </StatusCell>
        <StatusCell $w={20} />
        <StatusCell $w={20} />
        <StatusCell $w={176} $center>Average: ; Sum: 0</StatusCell>
        <StatusCell $w={93} $center $gap={6}>
          <ZoomSign>−</ZoomSign>
          <ZoomTrack>
            <ZoomKnob />
          </ZoomTrack>
          <ZoomSign>+</ZoomSign>
        </StatusCell>
        <StatusCell $w={34} $center>100%</StatusCell>
      </StatusBar>
    </Page>
  );
}
